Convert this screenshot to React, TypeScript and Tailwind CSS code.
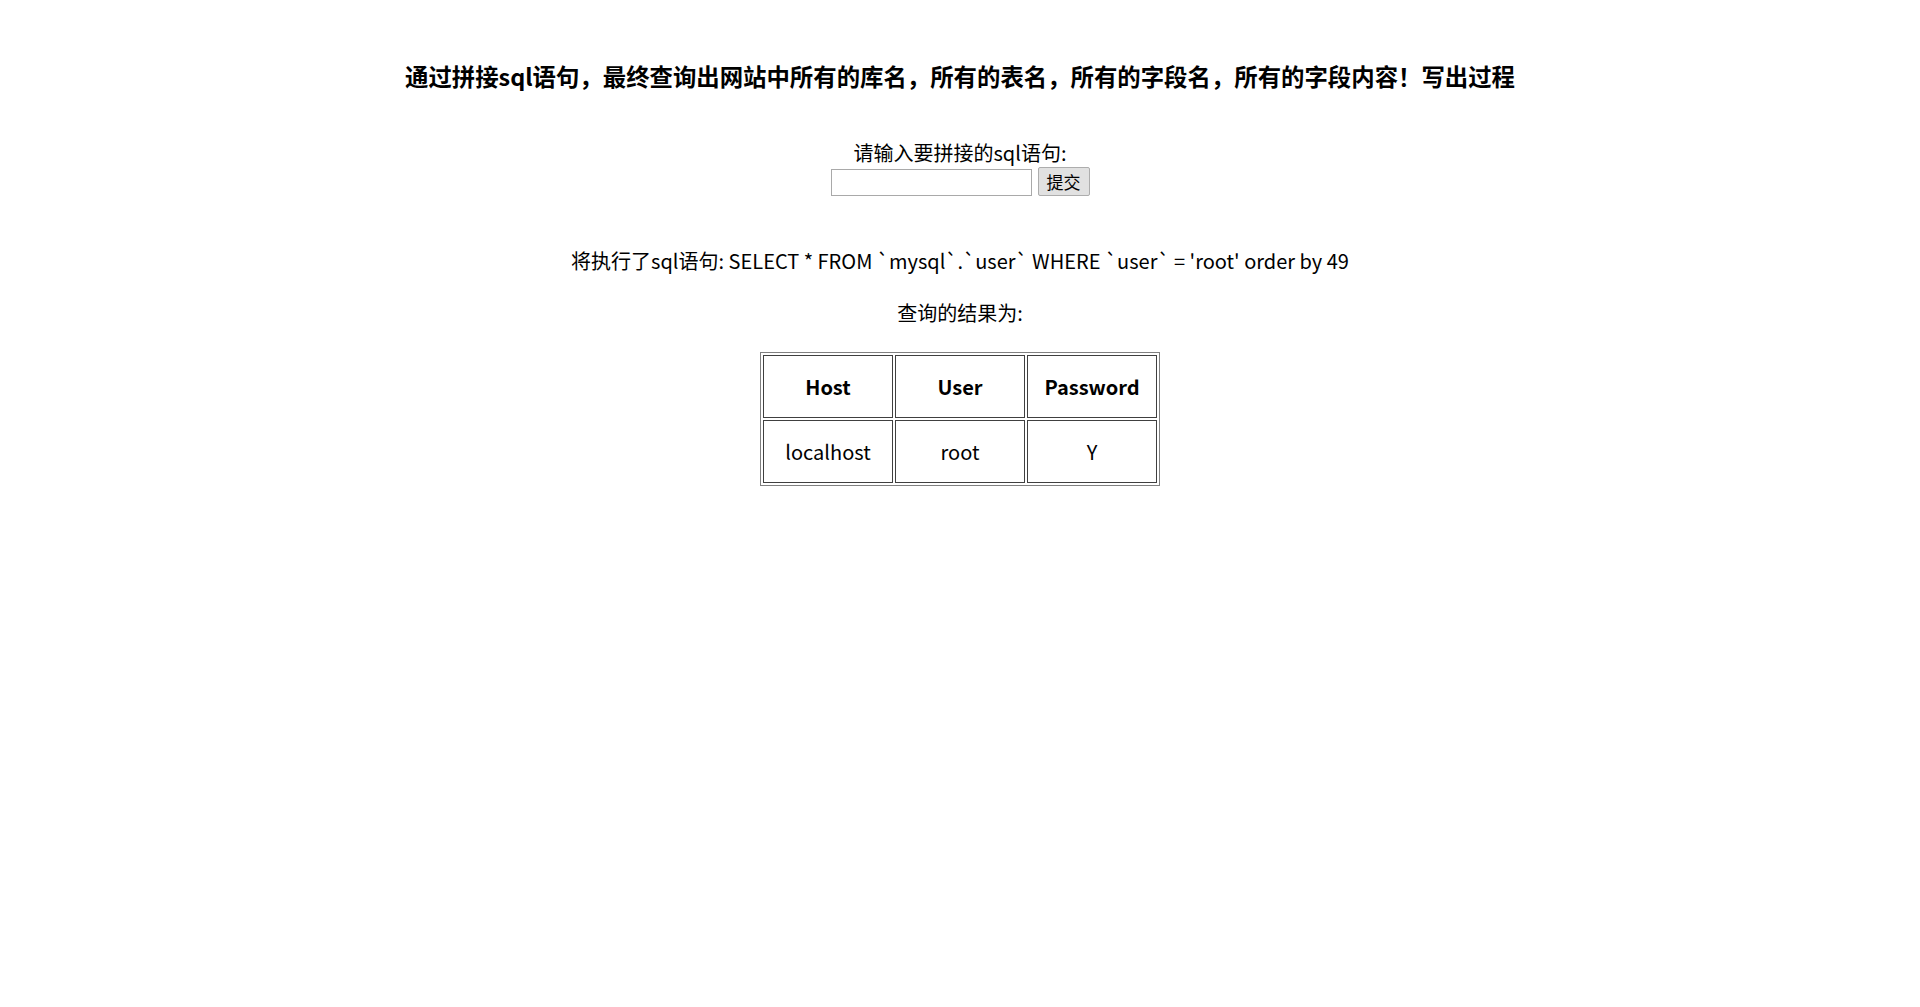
const rows = [{ host: 'localhost', user: 'root', password: 'Y' }];

export default function App() {
  return (
    <div className="min-h-screen bg-white text-black font-['Noto_Sans_CJK_SC','Noto_Sans',sans-serif]">
      <div className="flex flex-col items-center">
        {/* 标题 */}
        <h3 className="mt-[61px] text-[23.4px] leading-[30px] font-bold">
          通过拼接sql语句，最终查询出网站中所有的库名，所有的表名，所有的字段名，所有的字段内容！写出过程
        </h3>

        {/* 表单 */}
        <form className="mt-[48px] flex flex-col items-center text-[20px]" onSubmit={(e) => e.preventDefault()}>
          <label className="leading-[28px]">请输入要拼接的sql语句:</label>
          <div className="flex items-end gap-[6px]">
            <input
              type="text"
              className="w-[201px] h-[27px] border border-[#a9a9a9] bg-white px-[2px] text-[16px] outline-none"
            />
            <button
              type="submit"
              className="w-[52px] h-[29px] border border-[#adadad] bg-[#e1e1e1] text-[17px] leading-none rounded-[2px]"
            >
              提交
            </button>
          </div>
        </form>

        {/* 结果 */}
        <p className="mt-[51px] text-[20px] leading-[28px]">
          将执行了sql语句: SELECT * FROM `mysql`.`user` WHERE `user` = 'root' order by 49
        </p>
        <p className="mt-[24px] text-[20px] leading-[28px]">查询的结果为:</p>

        <table className="mt-[25px] border border-[#808080] border-separate border-spacing-[2px] text-[20px]">
          <thead>
            <tr>
              <th className="w-[130px] h-[63px] border border-[#404040] font-bold">Host</th>
              <th className="w-[130px] h-[63px] border border-[#404040] font-bold">User</th>
              <th className="w-[130px] h-[63px] border border-[#404040] font-bold">Password</th>
            </tr>
          </thead>
          <tbody>
            {rows.map((r) => (
              <tr key={r.host}>
                <td className="h-[63px] border border-[#404040] text-center">{r.host}</td>
                <td className="h-[63px] border border-[#404040] text-center">{r.user}</td>
                <td className="h-[63px] border border-[#404040] text-center">{r.password}</td>
              </tr>
            ))}
          </tbody>
        </table>
      </div>
    </div>
  );
}
